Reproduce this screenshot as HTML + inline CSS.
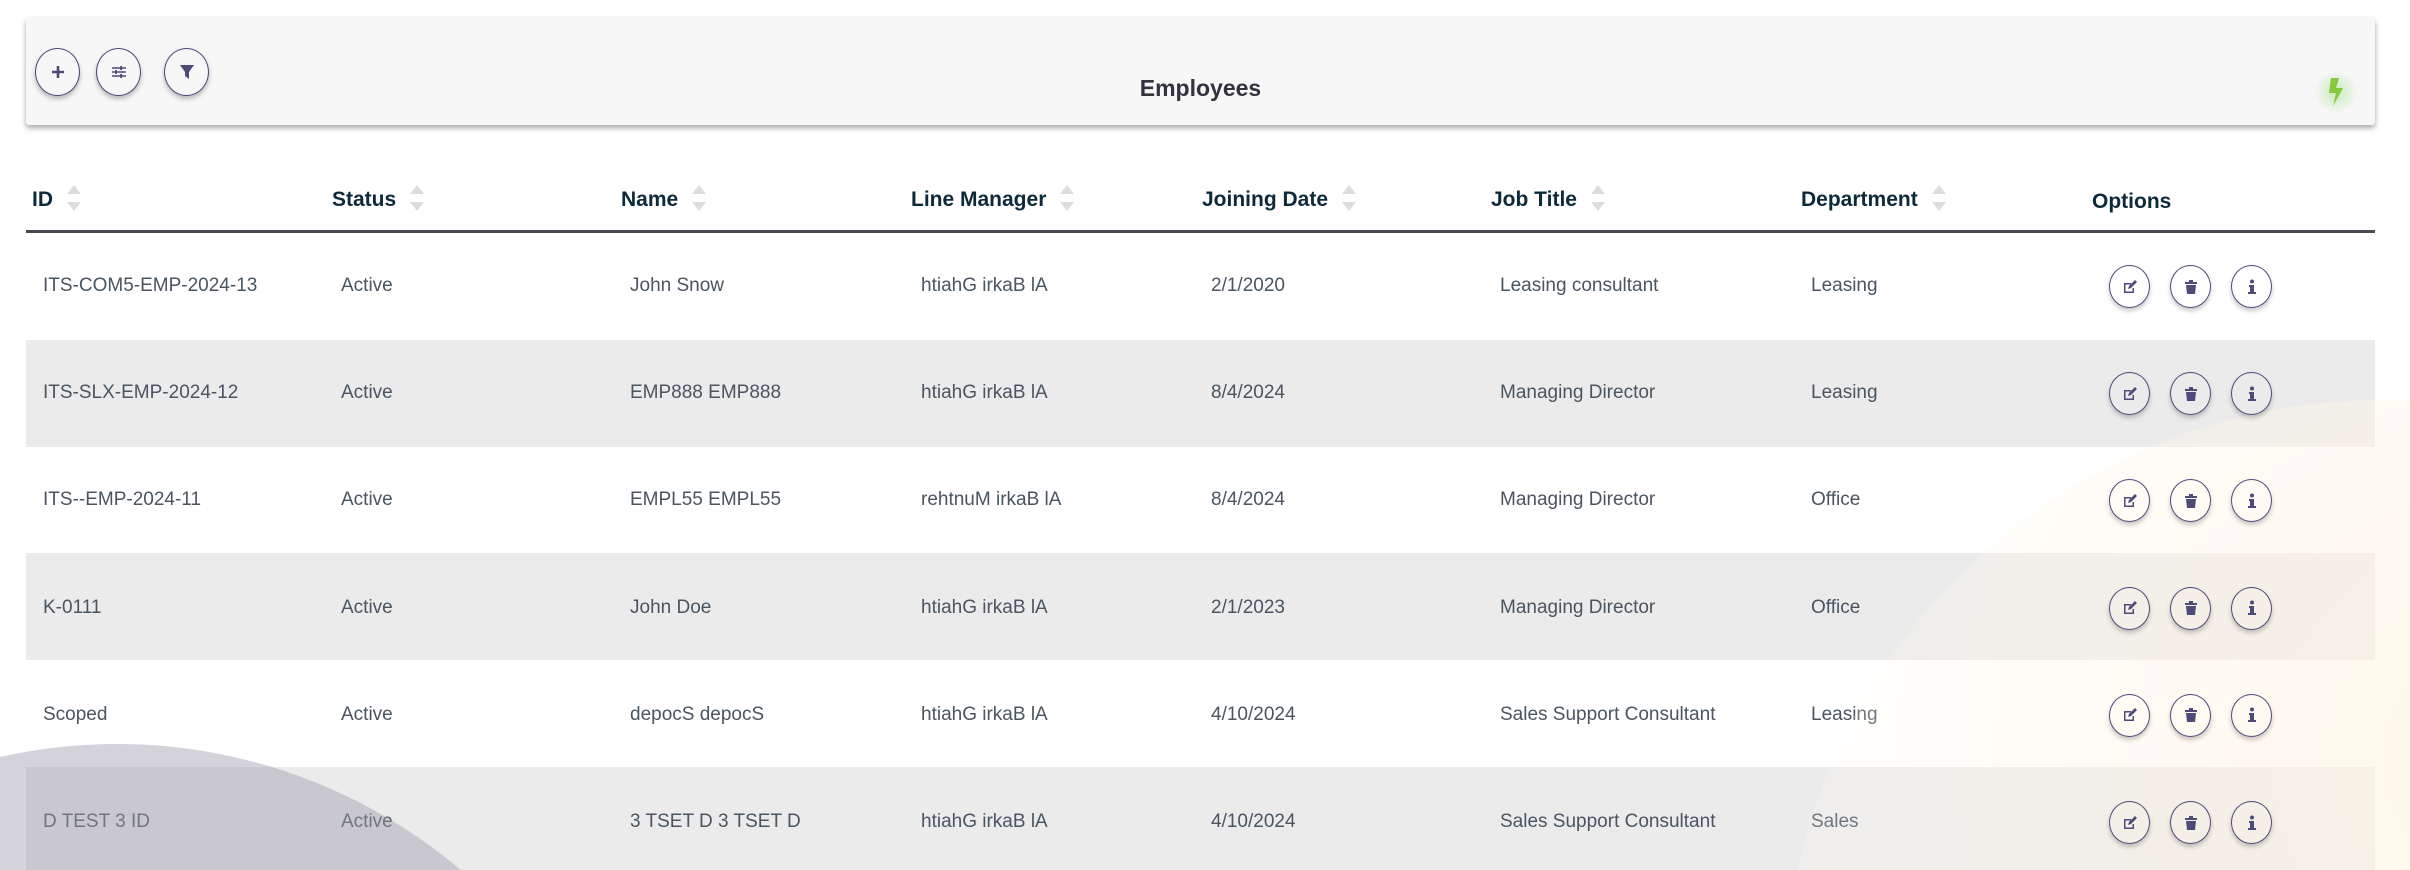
<!DOCTYPE html>
<html><head><meta charset="utf-8"><style>
*{margin:0;padding:0;box-sizing:border-box}
html,body{width:2410px;height:870px;overflow:hidden;background:#fff}
body{font-family:"Liberation Sans",sans-serif}
#wrap{position:relative;width:2410px;height:870px;overflow:hidden}
.bg1{position:absolute;left:-415px;top:744px;width:1064px;height:1064px;border-radius:50%;background:rgba(160,158,172,0.45);z-index:2;pointer-events:none}
.bg2{position:absolute;left:1783px;top:400px;width:1200px;height:1200px;border-radius:50%;background:radial-gradient(circle at 60% 30%,rgba(255,245,225,0.7),rgba(255,250,240,0.2) 60%);z-index:2}
.card{position:absolute;left:26px;top:18px;width:2349px;height:107px;background:#f7f7f7;border-radius:3px;box-shadow:0 3px 6px rgba(0,0,0,0.35);z-index:3}
.cb{position:absolute;top:30px;width:45px;height:48px;border-radius:50%;border:1.5px solid #4e4a7a;background:#f7f7f7;box-shadow:0 3px 5px rgba(0,0,0,0.25);display:flex;align-items:center;justify-content:center}
.title{position:absolute;left:0;right:0;top:57px;text-align:center;font-size:23px;font-weight:bold;color:#33323f}
.bolt{position:absolute;left:2288px;top:52px;width:44px;height:44px;border-radius:50%;background:radial-gradient(circle,rgba(150,220,120,0.5),rgba(150,220,120,0) 70%);display:flex;align-items:center;justify-content:center}
.th{position:absolute;top:187px;font-size:21px;font-weight:bold;color:#0d2a3a;display:flex;align-items:center;z-index:1}
.sort{display:inline-block;margin-left:14px;width:14px;height:26px;position:relative;top:-2px}
.sort:before{content:"";position:absolute;top:0;left:0;border-left:7px solid transparent;border-right:7px solid transparent;border-bottom:9px solid #ddd}
.sort:after{content:"";position:absolute;bottom:0;left:0;border-left:7px solid transparent;border-right:7px solid transparent;border-top:9px solid #ddd}
.line{position:absolute;left:26px;width:2349px;top:230px;height:3px;background:#4a4a55;z-index:1}
.row{position:absolute;left:26px;width:2349px;height:107px;z-index:1}
.g{background:#ebebeb}
.td{position:absolute;font-size:19px;color:#4a5560;z-index:1;line-height:20px}
.ob{position:absolute;width:41px;height:43px;border-radius:50%;border:1.5px solid #4e4a7a;background:transparent;box-shadow:0 3px 5px rgba(0,0,0,0.22);display:flex;align-items:center;justify-content:center;z-index:3}
</style></head><body><div id="wrap">
<div class="bg2"></div>
<div class="card">
 <div class="cb" style="left:9px"><svg width="16" height="16" viewBox="0 0 16 16"><path d="M8 2v12M2 8h12" stroke="#4e4a7a" stroke-width="2.6"/></svg></div>
 <div class="cb" style="left:70px"><svg width="18" height="16" viewBox="0 0 18 16"><path d="M2 4h14M2 8h14M2 12h14" stroke="#4e4a7a" stroke-width="1.5"/><path d="M11 2v4M6 6v4M11 10v4" stroke="#4e4a7a" stroke-width="1.8"/></svg></div>
 <div class="cb" style="left:138px"><svg width="16" height="18" viewBox="0 0 16 18"><path d="M1 2h14l-5 7v7l-4-3V9z" fill="#4e4a7a"/></svg></div>
 <div class="title">Employees</div>
 <div class="bolt"><svg width="18" height="28" viewBox="0 0 18 28"><path d="M4 0h8l-3 10h7L6 28l3-13H2z" fill="#86c93a"/></svg></div>
</div>
<div class="th" style="left:32px">ID<span class="sort"></span></div>
<div class="th" style="left:332px">Status<span class="sort"></span></div>
<div class="th" style="left:621px">Name<span class="sort"></span></div>
<div class="th" style="left:911px">Line Manager<span class="sort"></span></div>
<div class="th" style="left:1202px">Joining Date<span class="sort"></span></div>
<div class="th" style="left:1491px">Job Title<span class="sort"></span></div>
<div class="th" style="left:1801px">Department<span class="sort"></span></div>
<div class="th" style="left:2092px;top:190px">Options</div>
<div class="line"></div>

<div class="row" style="top:233px"></div>
<div class="row g" style="top:340px"></div>
<div class="row" style="top:447px"></div>
<div class="row g" style="top:553px"></div>
<div class="row" style="top:660px"></div>
<div class="row g" style="top:767px;height:103px"></div>

<div id="rows"></div>
<div class="bg1"></div>
</div>
<script>
var d=[["ITS-COM5-EMP-2024-13","Active","John Snow","htiahG irkaB lA","2/1/2020","Leasing consultant","Leasing"],
["ITS-SLX-EMP-2024-12","Active","EMP888 EMP888","htiahG irkaB lA","8/4/2024","Managing Director","Leasing"],
["ITS--EMP-2024-11","Active","EMPL55 EMPL55","rehtnuM irkaB lA","8/4/2024","Managing Director","Office"],
["K-0111","Active","John Doe","htiahG irkaB lA","2/1/2023","Managing Director","Office"],
["Scoped","Active","depocS depocS","htiahG irkaB lA","4/10/2024","Sales Support Consultant","Leasing"],
["D TEST 3 ID","Active","3 TSET D 3 TSET D","htiahG irkaB lA","4/10/2024","Sales Support Consultant","Sales"]];
var xs=[43,341,630,921,1211,1500,1811],h="";
var ic=['<svg width="16" height="16" viewBox="0 0 16 16"><path d="M2 4h7v1.5H3.5v7h7V9H12v5H2z" fill="#4e4a7a"/><path d="M6 10l1-3 6-6 2 2-6 6z" fill="#4e4a7a"/></svg>',
'<svg width="14" height="16" viewBox="0 0 14 16"><path d="M1 3h12v2H1zM5 1h4v2H5z" fill="#4e4a7a"/><path d="M2 6h10l-1 9H3z" fill="#4e4a7a"/></svg>',
'<svg width="8" height="16" viewBox="0 0 8 16"><circle cx="4" cy="2.5" r="2" fill="#4e4a7a"/><path d="M1 6h5v7h2v2H0v-2h2V8H1z" fill="#4e4a7a"/></svg>'];
for(var r=0;r<6;r++){var y=276+r*107.2;
for(var c=0;c<7;c++)h+='<div class="td" style="left:'+xs[c]+'px;top:'+y+'px">'+d[r][c]+'</div>';
[2109,2170,2231].forEach(function(x,i){h+='<div class="ob" style="left:'+x+'px;top:'+(y-11)+'px">'+ic[i]+'</div>';});}
document.getElementById("rows").innerHTML=h;
</script>
</body></html>
